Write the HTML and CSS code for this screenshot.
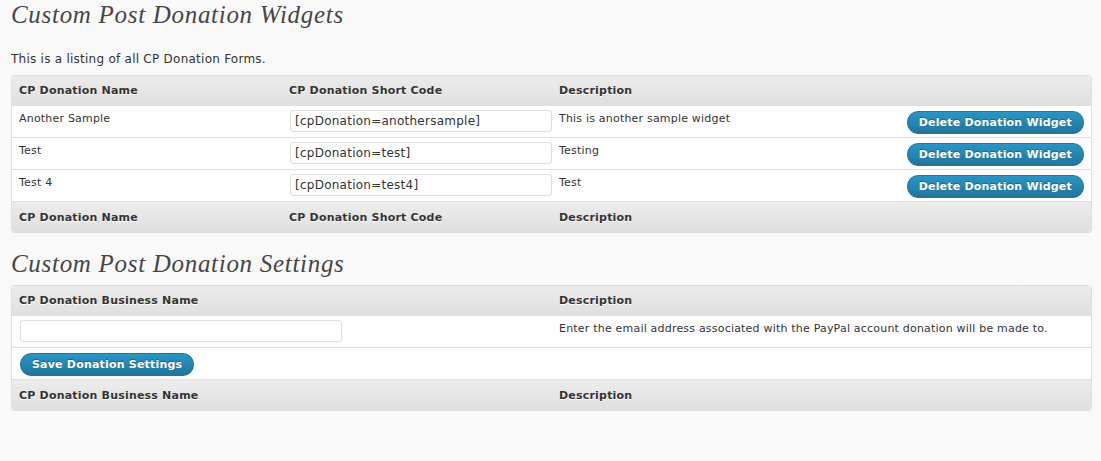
FILE: index.html
```html
<!DOCTYPE html>
<html>
<head>
<meta charset="utf-8">
<link rel="stylesheet" href="styles.css">
</head>
<body>
<div class="wrap">
  <h2 class="page-title">Custom Post Donation Widgets</h2>
  <p class="intro">This is a listing of all CP Donation Forms.</p>
  <table class="widefat widgets">
    <colgroup>
      <col class="c270">
      <col class="c270">
      <col class="c270">
      <col>
    </colgroup>
    <thead>
      <tr>
        <th>CP Donation Name</th>
        <th>CP Donation Short Code</th>
        <th>Description</th>
        <th></th>
      </tr>
    </thead>
    <tbody>
      <tr>
        <td class="txt">Another Sample</td>
        <td><input class="code-input" type="text" value="[cpDonation=anothersample]"></td>
        <td class="txt">This is another sample widget</td>
        <td class="act"><button class="btn-primary">Delete Donation Widget</button></td>
      </tr>
      <tr>
        <td class="txt">Test</td>
        <td><input class="code-input" type="text" value="[cpDonation=test]"></td>
        <td class="txt">Testing</td>
        <td class="act"><button class="btn-primary">Delete Donation Widget</button></td>
      </tr>
      <tr>
        <td class="txt">Test 4</td>
        <td><input class="code-input" type="text" value="[cpDonation=test4]"></td>
        <td class="txt">Test</td>
        <td class="act"><button class="btn-primary">Delete Donation Widget</button></td>
      </tr>
    </tbody>
    <tfoot>
      <tr>
        <th>CP Donation Name</th>
        <th>CP Donation Short Code</th>
        <th>Description</th>
        <th></th>
      </tr>
    </tfoot>
  </table>

  <h2 class="page-title second">Custom Post Donation Settings</h2>
  <table class="widefat">
    <colgroup>
      <col class="c540">
      <col>
    </colgroup>
    <thead>
      <tr>
        <th>CP Donation Business Name</th>
        <th>Description</th>
      </tr>
    </thead>
    <tbody>
      <tr>
        <td><input class="biz-input" type="text" value=""></td>
        <td class="txt">Enter the email address associated with the PayPal account donation will be made to.</td>
      </tr>
      <tr>
        <td><button class="btn-primary">Save Donation Settings</button></td>
        <td></td>
      </tr>
    </tbody>
    <tfoot>
      <tr>
        <th>CP Donation Business Name</th>
        <th>Description</th>
      </tr>
    </tfoot>
  </table>
</div>
</body>
</html>
```
FILE: styles.css
```css
html, body {
  margin: 0;
  padding: 0;
  background: #f9f9f9;
}
body {
  font-family: "DejaVu Sans", sans-serif;
  font-size: 11px;
  letter-spacing: 0.2px;
  color: #333;
}
.wrap {
  margin: 0 9px 0 11px;
}
.page-title {
  font-family: "Liberation Serif", "DejaVu Serif", serif;
  font-style: italic;
  font-weight: normal;
  font-size: 25px;
  letter-spacing: 0.7px;
  line-height: 29px;
  color: #464646;
  margin: 0;
  padding: 0;
}
.page-title.second {
  margin: 16px 0 7px 0;
}
.intro {
  font-size: 12px;
  letter-spacing: 0.25px;
  line-height: 16px;
  margin: 22px 0 8px 0;
}
.widefat {
  width: 100%;
  table-layout: fixed;
  border-collapse: separate;
  border-spacing: 0;
  border: 1px solid #dfdfdf;
  border-radius: 3px;
  background: #fff;
}
.c270 { width: 270px; }
.c540 { width: 540px; }
.widefat th {
  text-align: left;
  font-weight: bold;
  font-size: 11px;
  color: #333;
  text-shadow: 0 1px 0 #fff;
  height: 30px;
  padding: 0 7px;
  box-sizing: border-box;
  vertical-align: middle;
  background: linear-gradient(to bottom, #ececec, #dfdfdf);
}
.widefat thead th:first-child { border-top-left-radius: 3px; }
.widefat thead th:last-child { border-top-right-radius: 3px; }
.widefat tfoot th:first-child { border-bottom-left-radius: 3px; }
.widefat tfoot th:last-child { border-bottom-right-radius: 3px; }
.widefat thead th { border-bottom: 1px solid #dfdfdf; }
.widefat td {
  vertical-align: top;
  padding: 4px 7px 0 7px;
  height: 32px;
  box-sizing: border-box;
  border-bottom: 1px solid #dfdfdf;
  white-space: nowrap;
}
.widefat td.txt {
  padding-top: 5px;
  line-height: 15px;
}
.act { text-align: right; }
.code-input, .biz-input {
  box-sizing: border-box;
  height: 22px;
  border: 1px solid #dfdfdf;
  border-radius: 3px;
  background: #fff;
  font-family: "DejaVu Sans", sans-serif;
  font-size: 12px;
  letter-spacing: 0.25px;
  color: #333;
  padding: 1px 4px;
  margin: 0 0 0 1px;
  display: block;
}
.code-input { width: 262px; }
.biz-input { width: 322px; }
.btn-primary {
  display: inline-block;
  box-sizing: border-box;
  height: 23px;
  padding: 0 11px;
  border: 1px solid #21759b;
  border-radius: 11px;
  background: linear-gradient(to bottom, #2a95c5, #21759b);
  color: #fff;
  font-family: "DejaVu Sans", sans-serif;
  font-weight: bold;
  font-size: 11px;
  letter-spacing: 0.2px;
  text-shadow: 0 -1px 0 rgba(0,0,0,0.3);
  cursor: pointer;
  margin: 1px 0 0 1px;
}
```
